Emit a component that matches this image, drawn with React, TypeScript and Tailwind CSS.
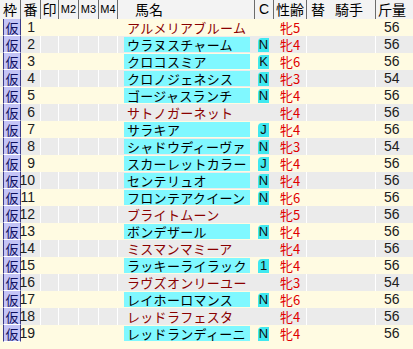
import React from "react";

interface Horse {
  no: number;
  name: string;
  hi: boolean;
  c: string;
  sex: string;
  kin: number;
}

const horses: Horse[] = [
  { no: 1, name: "アルメリアブルーム", hi: false, c: "", sex: "牝5", kin: 56 },
  { no: 2, name: "ウラヌスチャーム", hi: true, c: "N", sex: "牝4", kin: 56 },
  { no: 3, name: "クロコスミア", hi: true, c: "K", sex: "牝6", kin: 56 },
  { no: 4, name: "クロノジェネシス", hi: true, c: "N", sex: "牝3", kin: 54 },
  { no: 5, name: "ゴージャスランチ", hi: true, c: "N", sex: "牝4", kin: 56 },
  { no: 6, name: "サトノガーネット", hi: false, c: "", sex: "牝4", kin: 56 },
  { no: 7, name: "サラキア", hi: true, c: "J", sex: "牝4", kin: 56 },
  { no: 8, name: "シャドウディーヴァ", hi: true, c: "N", sex: "牝3", kin: 54 },
  { no: 9, name: "スカーレットカラー", hi: true, c: "J", sex: "牝4", kin: 56 },
  { no: 10, name: "センテリュオ", hi: true, c: "N", sex: "牝4", kin: 56 },
  { no: 11, name: "フロンテアクイーン", hi: true, c: "N", sex: "牝6", kin: 56 },
  { no: 12, name: "ブライトムーン", hi: false, c: "", sex: "牝5", kin: 56 },
  { no: 13, name: "ボンデザール", hi: true, c: "N", sex: "牝4", kin: 56 },
  { no: 14, name: "ミスマンマミーア", hi: false, c: "", sex: "牝4", kin: 56 },
  { no: 15, name: "ラッキーライラック", hi: true, c: "1", sex: "牝4", kin: 56 },
  { no: 16, name: "ラヴズオンリーユー", hi: false, c: "", sex: "牝3", kin: 54 },
  { no: 17, name: "レイホーロマンス", hi: true, c: "N", sex: "牝6", kin: 56 },
  { no: 18, name: "レッドラフェスタ", hi: false, c: "", sex: "牝4", kin: 56 },
  { no: 19, name: "レッドランディーニ", hi: true, c: "N", sex: "牝4", kin: 56 },
];

const cols = "grid grid-cols-[21px_20px_18px_20px_20px_19px_137px_19px_33px_69px_37px]";
const jp = "font-['Noto_Sans_CJK_JP',sans-serif]";
const num = "font-['Liberation_Sans',sans-serif]";

function HeadCell({ children, className = "" }: { children?: React.ReactNode; className?: string }) {
  return (
    <div className={`h-[19px] flex items-center border-r border-[#6b6b6b] leading-[19px] whitespace-nowrap ${className}`}>
      {children}
    </div>
  );
}

export default function App() {
  return (
    <div className="w-[413px] h-[349px] bg-[#fffbe2] overflow-hidden select-none">
      {/* Header */}
      <div className={`${cols} bg-[#f3f3f3] text-black text-[14px] ${jp}`}>
        <HeadCell className="justify-center">枠</HeadCell>
        <HeadCell className="justify-center">番</HeadCell>
        <HeadCell className="justify-center">印</HeadCell>
        <HeadCell className={`justify-center text-[11px] ${num}`}>M2</HeadCell>
        <HeadCell className={`justify-center text-[11px] ${num}`}>M3</HeadCell>
        <HeadCell className={`justify-center text-[11px] ${num}`}>M4</HeadCell>
        <HeadCell className="pl-[17px]">馬名</HeadCell>
        <HeadCell className={`justify-center ${num}`}>C</HeadCell>
        <HeadCell className="pl-[2px]">性齢</HeadCell>
        <HeadCell className="pl-[4px]">
          <span>替</span>
          <span className="ml-[10px]">騎手</span>
        </HeadCell>
        <HeadCell className="pl-[2px] border-r-0">斤量</HeadCell>
      </div>

      {/* Rows */}
      {horses.map((h, i) => {
        const bg = i % 2 === 0 ? "bg-[#fffbe2]" : "bg-[#ebebeb]";
        const line = i % 2 === 0 ? "border-[#fffbe2]" : "border-white";
        return (
          <div
            key={h.no}
            className={`${cols} ${bg} h-[17px] text-[13px] leading-[15px] whitespace-nowrap`}
          >
            <div className="flex h-[17px] pl-[3px]">
              <div className={`flex-1 flex items-center justify-center bg-[#c4c4f6] border-x border-[#3a3a8a] border-b border-b-white text-[#101060] text-[13px] leading-[15px] ${jp}`}>
                仮
              </div>
            </div>
            <div className={`flex h-[17px] items-center justify-end pr-[5px] border-r ${line} text-[14px] text-[#202020] ${num}`}>
              {h.no}
            </div>
            <div className={`h-[17px] border-r ${line}`} />
            <div className={`h-[17px] border-r ${line}`} />
            <div className={`h-[17px] border-r ${line}`} />
            <div className={`h-[17px] border-r ${line}`} />
            <div className="flex h-[17px] py-[1px] pl-[6px] pr-[5px]">
              <div
                className={`flex-1 min-w-0 flex items-center pl-[3px] tracking-[0.3px] ${jp} ${
                  h.hi ? "bg-[#80f8ff] text-black" : "text-[#8a0000]"
                }`}
              >
                {h.name}
              </div>
            </div>
            <div className="flex h-[17px] items-center pl-[3px]">
              {h.c && (
                <div className={`w-[11px] h-[14px] flex items-center justify-center bg-[#40e8f0] rounded-tl-[4px] text-[13px] text-[#101010] ${num}`}>
                  {h.c}
                </div>
              )}
            </div>
            <div className={`flex h-[17px] items-center pl-[6px] border-r ${line} text-[#e00000] ${jp}`}>
              {h.sex}
            </div>
            <div className={`h-[17px] border-r ${line}`} />
            <div className={`flex h-[17px] items-center pl-[8px] text-[14px] text-[#202020] ${num}`}>{h.kin}</div>
          </div>
        );
      })}
    </div>
  );
}
